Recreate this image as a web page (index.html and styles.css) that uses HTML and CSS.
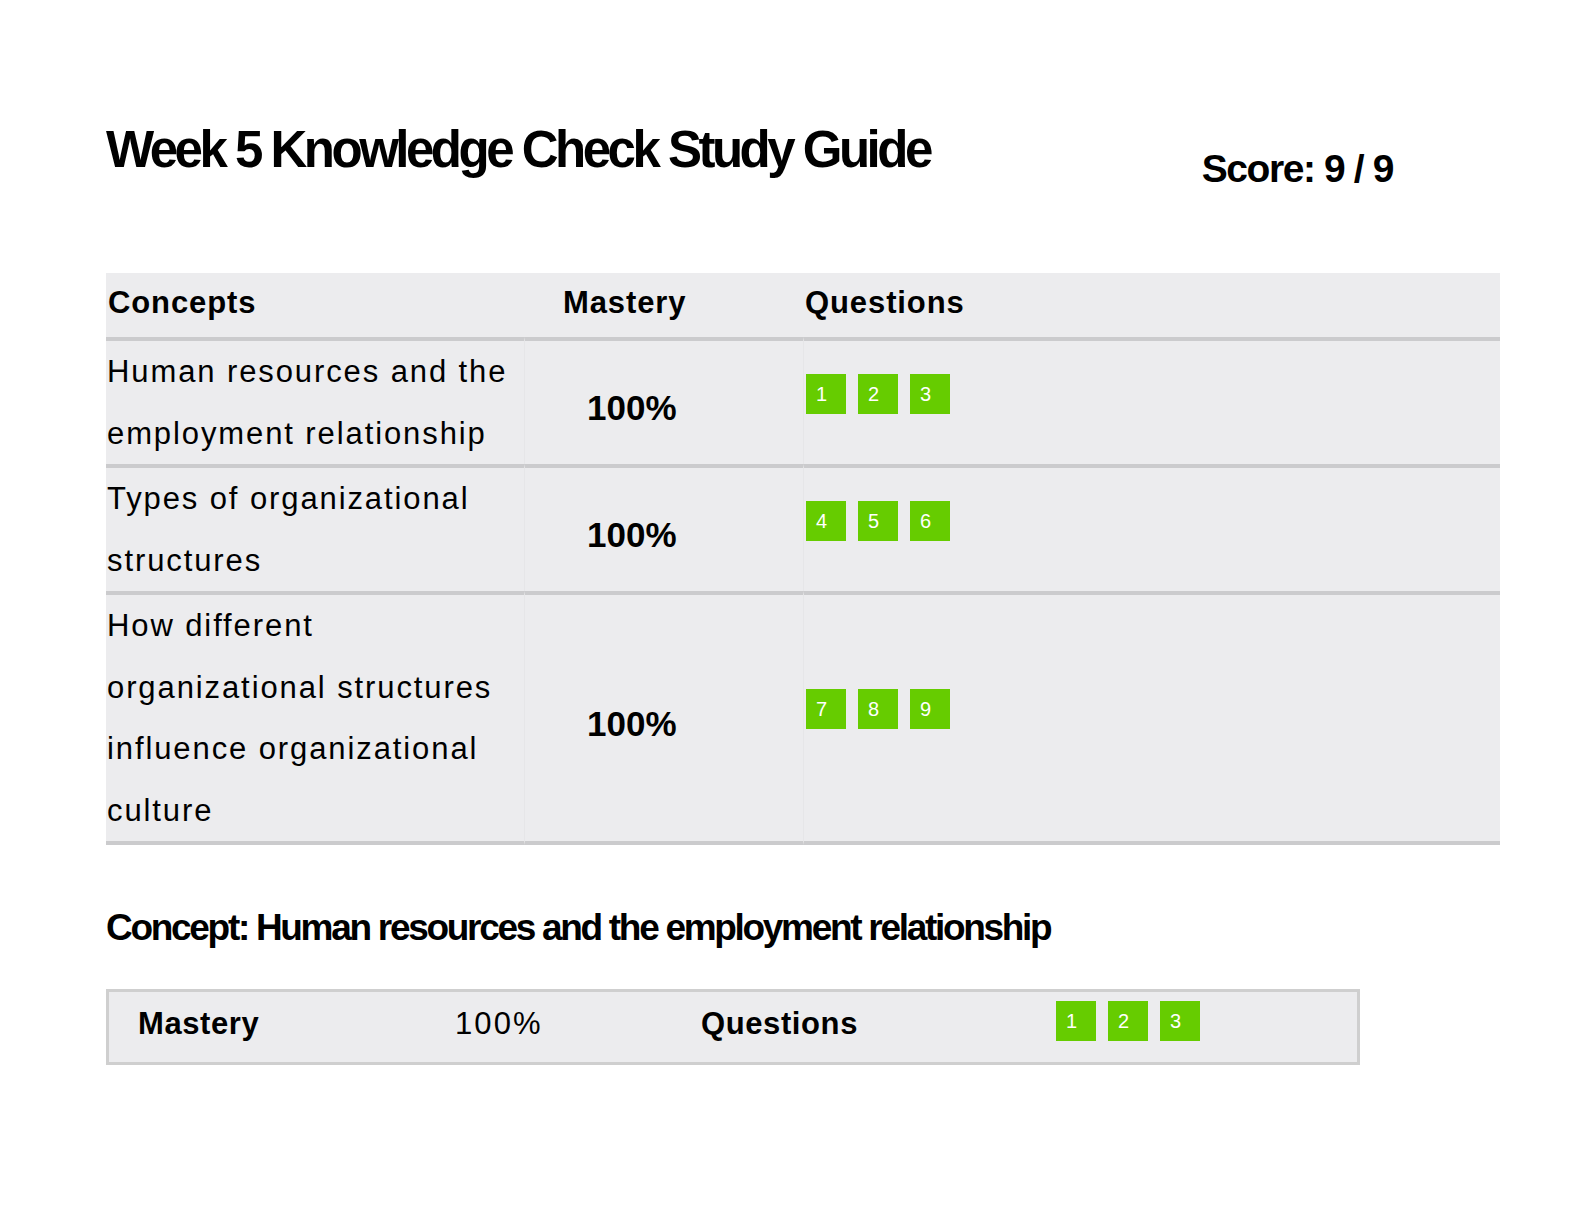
FILE: index.html
```html
<!DOCTYPE html>
<html lang="en">
<head>
<meta charset="utf-8">
<title>Week 5 Knowledge Check Study Guide</title>
<link rel="stylesheet" href="styles.css">
</head>
<body>
<div class="page">
  <header class="top">
    <h1 class="title">Week 5 Knowledge Check Study Guide</h1>
    <div class="score">Score: 9 / 9</div>
  </header>

  <table class="summary">
    <thead>
      <tr>
        <th class="h-concept">Concepts</th>
        <th class="h-mastery">Mastery</th>
        <th class="h-questions">Questions</th>
      </tr>
    </thead>
    <tbody>
      <tr>
        <td class="concept">Human resources and the employment relationship</td>
        <td class="mastery">100%</td>
        <td class="questions"><div class="badges"><span class="badge">1</span><span class="badge">2</span><span class="badge">3</span></div></td>
      </tr>
      <tr>
        <td class="concept">Types of organizational structures</td>
        <td class="mastery">100%</td>
        <td class="questions"><div class="badges"><span class="badge">4</span><span class="badge">5</span><span class="badge">6</span></div></td>
      </tr>
      <tr>
        <td class="concept">How different organizational structures influence organizational culture</td>
        <td class="mastery">100%</td>
        <td class="questions"><div class="badges"><span class="badge">7</span><span class="badge">8</span><span class="badge">9</span></div></td>
      </tr>
    </tbody>
  </table>

  <h2 class="concept-heading">Concept: Human resources and the employment relationship</h2>

  <div class="detail">
    <div class="d-label">Mastery</div>
    <div class="d-value">100%</div>
    <div class="d-label">Questions</div>
    <div class="badges"><span class="badge">1</span><span class="badge">2</span><span class="badge">3</span></div>
  </div>
</div>
</body>
</html>
```

FILE: styles.css
```css
body {
  margin: 0;
  background: #ffffff;
  color: #000000;
  font-family: "Liberation Sans", Arial, sans-serif;
}

.page {
  padding: 124px 0 80px 106px;
}

.top {
  display: flex;
  justify-content: space-between;
  align-items: flex-start;
  width: 1287px;
}

.title {
  margin: 0;
  font-weight: bold;
  font-size: 51px;
  line-height: 1;
  letter-spacing: -3.5px;
}

.score {
  margin-top: 25px;
  font-weight: bold;
  font-size: 39px;
  line-height: 1;
  letter-spacing: -1.4px;
}

.summary {
  margin-top: 85px;
  width: 1394px;
  border-collapse: separate;
  border-spacing: 0;
  background: #ececee;
  table-layout: fixed;
}

.summary th,
.summary td {
  padding: 0;
  text-align: left;
  vertical-align: middle;
}

.summary th {
  height: 64px;
  box-sizing: border-box;
  padding-bottom: 5px;
  font-size: 31px;
  font-weight: bold;
  letter-spacing: 0.9px;
}

.summary th.h-concept { width: 418px; padding-left: 2px; }
.summary th.h-mastery { width: 279px; padding-left: 39px; }
.summary th.h-questions { padding-left: 2px; }

.summary td {
  border-top: 4px solid #cbcbcd;
}

.summary tbody tr:last-child td {
  border-bottom: 4px solid #cbcbcd;
}

.summary td + td {
  border-left: 1px solid #e6e6e8;
}

.summary td.concept {
  padding-left: 1px;
  font-size: 31px;
  line-height: 61.5px;
  letter-spacing: 1.9px;
}

.summary td.mastery {
  padding: 11px 0 0 62px;
  font-size: 35px;
  font-weight: bold;
}

.summary td.questions {
  padding: 0 0 18px 2px;
}

.badges {
  display: flex;
  gap: 12px;
}

.badge {
  display: block;
  width: 40px;
  height: 40px;
  box-sizing: border-box;
  padding-left: 10px;
  background: #66cc00;
  color: #ffffff;
  font-size: 20px;
  line-height: 40px;
}

.concept-heading {
  margin: 64px 0 0 0;
  font-weight: bold;
  font-size: 37px;
  line-height: 1;
  letter-spacing: -2.3px;
}

.detail {
  margin-top: 43px;
  width: 1254px;
  height: 76px;
  box-sizing: border-box;
  border: 3px solid #cfcfcf;
  background: #ececee;
  padding: 6px 0 24px 29px;
  display: grid;
  grid-template-columns: 317px 246px 355px auto;
  align-items: center;
}

.d-label {
  padding-top: 6px;
  font-size: 31px;
  font-weight: bold;
  letter-spacing: 0.6px;
  line-height: 40px;
}

.d-value {
  padding-top: 6px;
  font-size: 31px;
  letter-spacing: 2.1px;
  line-height: 40px;
}
```
